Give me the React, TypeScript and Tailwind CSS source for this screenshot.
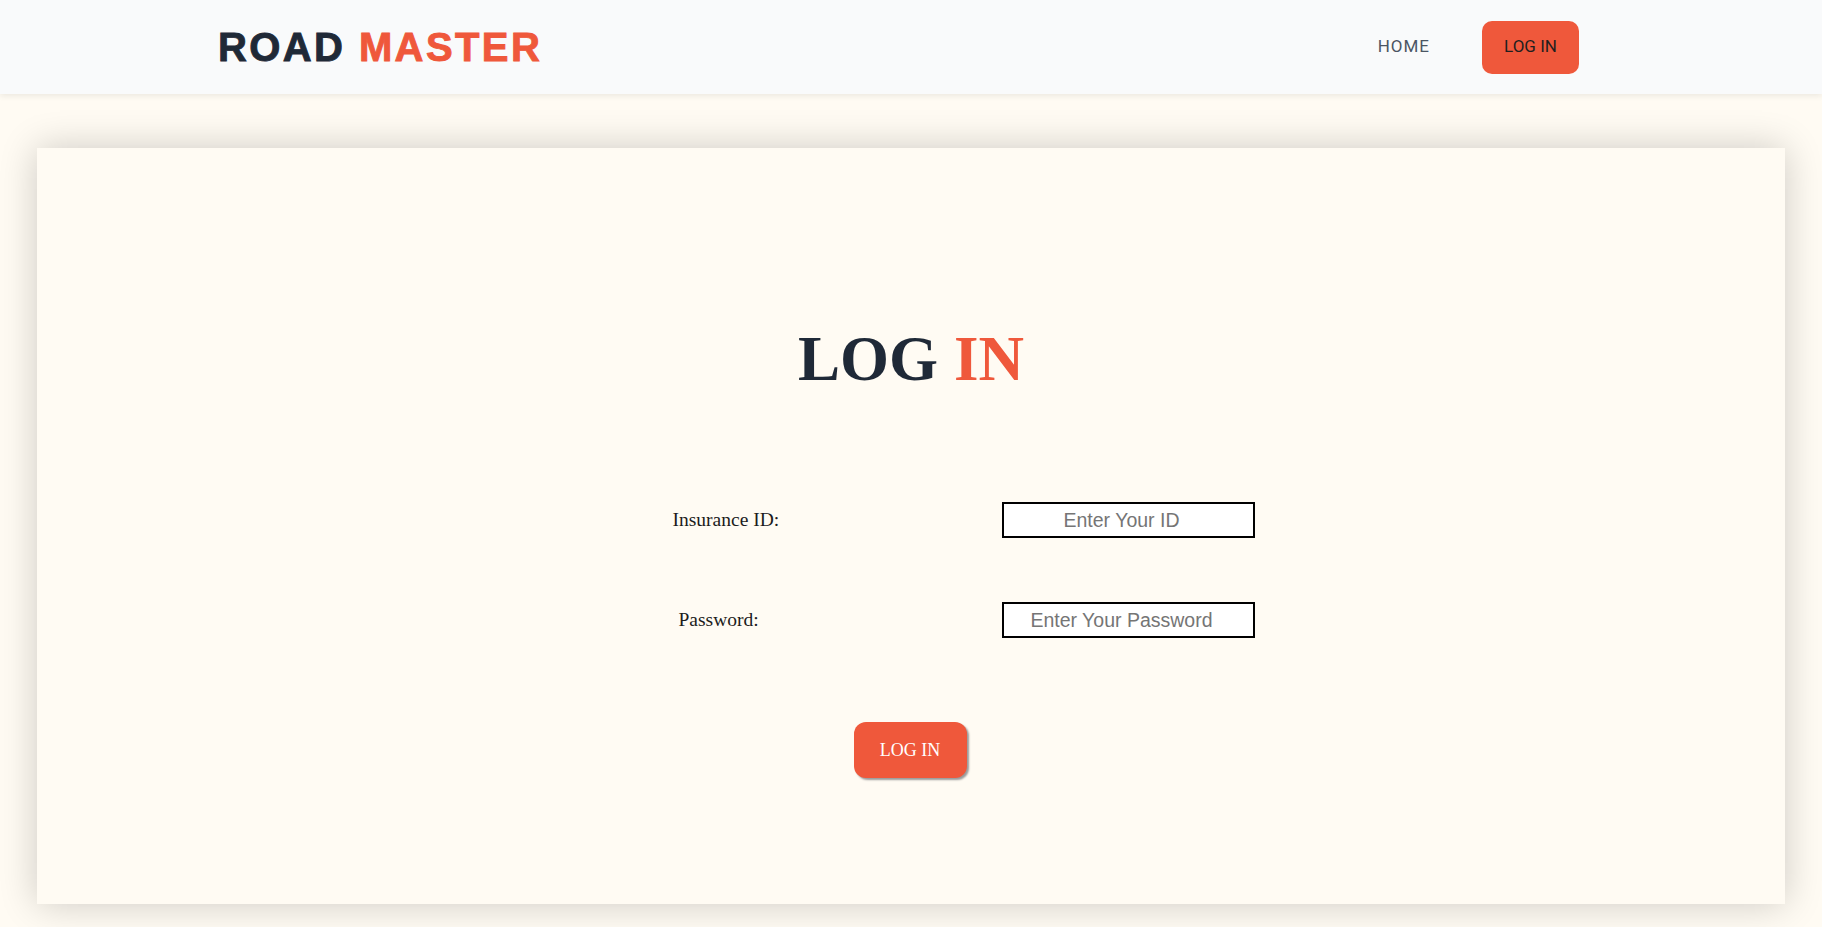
import React from "react";

export default function App() {
  return (
    <div className="min-h-[927px] bg-[#fffbf3]">
      <header className="relative z-10 h-[94px] bg-[#f9fafb] shadow-[0_2px_6px_rgba(0,0,0,0.08)] flex items-center justify-between pl-[218px] pr-[243px]">
        <div className="font-['Liberation_Sans',Arial,sans-serif] font-bold text-[40px] leading-none tracking-[2.4px] [-webkit-text-stroke:0.9px_currentColor] text-[#1f2937]">
          ROAD <span className="text-[#ef583b]">MASTER</span>
        </div>
        <nav className="flex items-center gap-[52px]">
          <a className="font-['Roboto',sans-serif] text-[17px] tracking-[1px] text-[#4b5563]">HOME</a>
          <button className="h-[53px] w-[97px] rounded-[10px] bg-[#ef583b] font-['Roboto',sans-serif] text-[17px] text-[#1f1f1f]">
            LOG IN
          </button>
        </nav>
      </header>

      <main className="pt-[54px] pb-[23px]">
        <section className="mx-[37px] bg-[#fffbf3] shadow-[0_0_36px_rgba(0,0,0,0.2)] pt-[179px] pb-[126px] flex flex-col items-center">
          <h1 className="font-['Liberation_Serif','Times_New_Roman',serif] font-bold text-[63px] leading-[64px] text-[#1f2937]">
            LOG <span className="text-[#ef583b]">IN</span>
          </h1>

          <div className="mt-[111px] w-full flex justify-center pl-[105px]">
            <div className="grid grid-cols-[329px_253px] gap-y-[64px] items-center">
              <label className="font-['Liberation_Serif','Times_New_Roman',serif] text-[19.5px] leading-[20px] text-[#1c1c1c]">
                Insurance ID:
              </label>
              <input
                type="text"
                placeholder="Enter Your ID"
                className="h-[36px] w-[253px] border-2 border-black bg-white pr-[13px] text-center font-['Liberation_Sans',Arial,sans-serif] text-[19.5px] placeholder:text-[#757575] outline-none"
              />
              <label className="ml-[6px] font-['Liberation_Serif','Times_New_Roman',serif] text-[19.5px] leading-[20px] text-[#1c1c1c]">
                Password:
              </label>
              <input
                type="password"
                placeholder="Enter Your Password"
                className="h-[36px] w-[253px] border-2 border-black bg-white pr-[13px] text-center font-['Liberation_Sans',Arial,sans-serif] text-[19.5px] placeholder:text-[#757575] outline-none"
              />
            </div>
          </div>

          <button className="mt-[84px] -ml-[2px] h-[56px] w-[113px] rounded-[12px] bg-[#ef583b] shadow-[2px_2px_2px_#9a9a9a] font-['Liberation_Serif','Times_New_Roman',serif] text-[18px] text-white">
            LOG IN
          </button>
        </section>
      </main>
    </div>
  );
}
